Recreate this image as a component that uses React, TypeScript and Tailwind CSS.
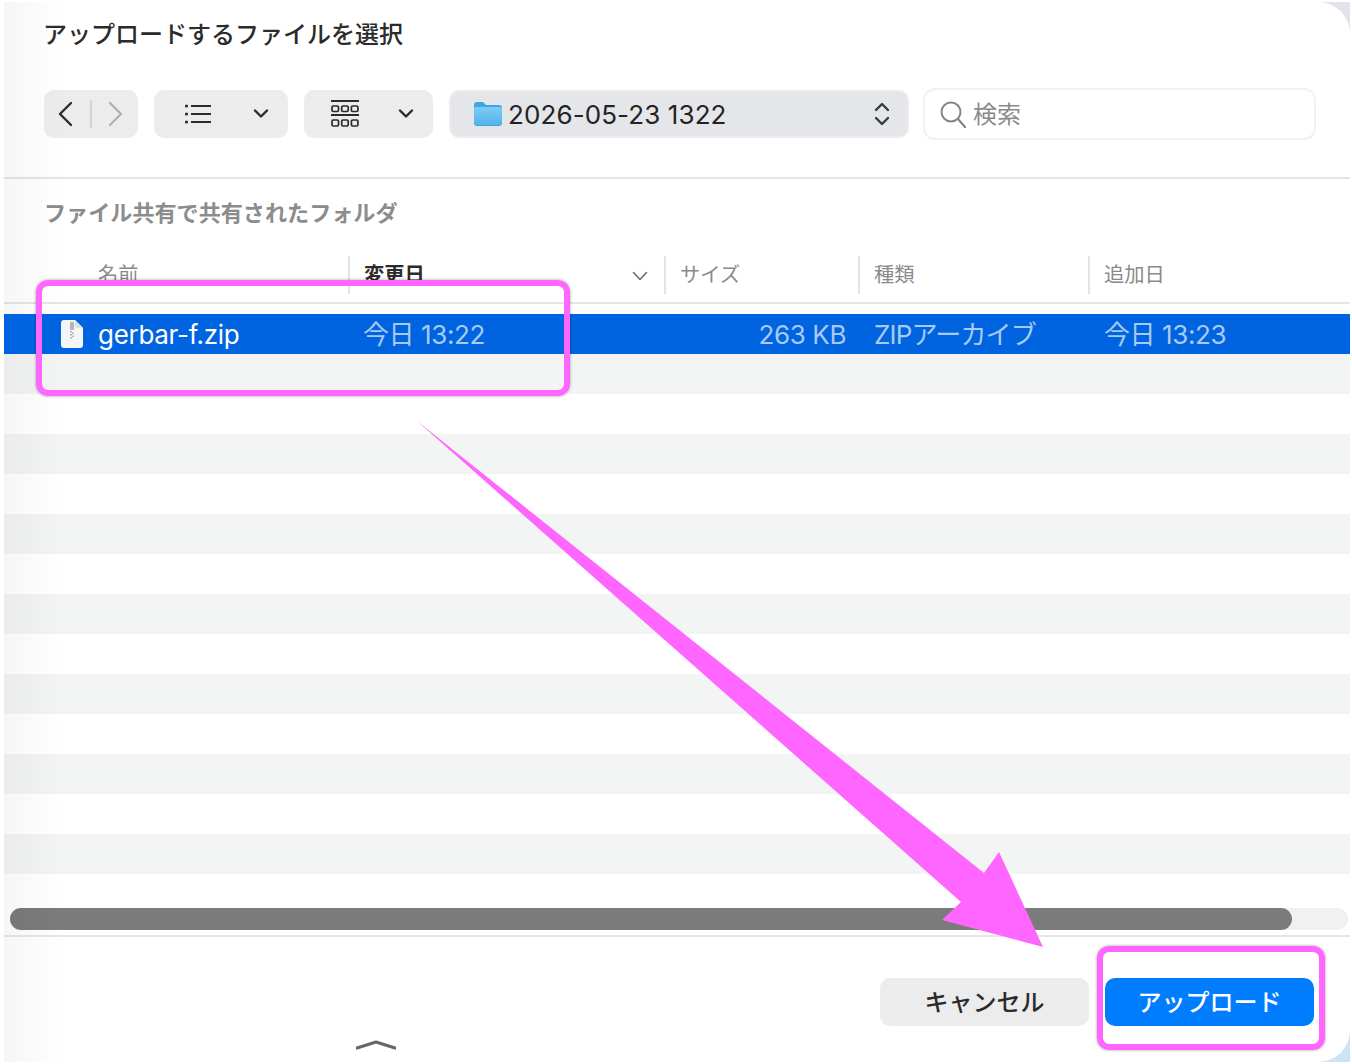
const jp = "font-['Inter','Noto_Sans_CJK_JP',sans-serif]";

const Chevron = ({ className = '' }: { className?: string }) => (
  <svg width="16" height="12" viewBox="0 0 16 12" className={className}>
    <path d="M2 2.5 L8 8.5 L14 2.5" fill="none" stroke="#2b2b2b" strokeWidth="2.4" strokeLinecap="round" strokeLinejoin="round" />
  </svg>
);

const ListIcon = () => (
  <svg width="28" height="22" viewBox="0 0 28 22">
    <circle cx="2.5" cy="3" r="1.6" fill="#2b2b2b" />
    <circle cx="2.5" cy="11" r="1.6" fill="#2b2b2b" />
    <circle cx="2.5" cy="19" r="1.6" fill="#2b2b2b" />
    <path d="M7 3H27M7 11H27M7 19H27" stroke="#2b2b2b" strokeWidth="1.8" />
  </svg>
);

const GalleryIcon = () => (
  <svg width="28" height="28" viewBox="0 0 28 28">
    <path d="M0 1H28M0 15H28" stroke="#2b2b2b" strokeWidth="1.8" />
    <rect x="1" y="6" width="6.5" height="5.5" rx="1.2" fill="none" stroke="#2b2b2b" strokeWidth="1.7" />
    <rect x="10.7" y="6" width="6.5" height="5.5" rx="1.2" fill="none" stroke="#2b2b2b" strokeWidth="1.7" />
    <rect x="20.4" y="6" width="6.5" height="5.5" rx="1.2" fill="none" stroke="#2b2b2b" strokeWidth="1.7" />
    <rect x="1" y="20" width="6.5" height="6" rx="1.2" fill="none" stroke="#2b2b2b" strokeWidth="1.7" />
    <rect x="10.7" y="20" width="6.5" height="6" rx="1.2" fill="none" stroke="#2b2b2b" strokeWidth="1.7" />
    <rect x="20.4" y="20" width="6.5" height="6" rx="1.2" fill="none" stroke="#2b2b2b" strokeWidth="1.7" />
  </svg>
);

const FolderIcon = () => (
  <svg width="30" height="26" viewBox="0 0 30 26">
    <defs>
      <linearGradient id="folderFront" x1="0" y1="0" x2="0" y2="1">
        <stop offset="0" stopColor="#7ccbf6" />
        <stop offset="1" stopColor="#52b4ec" />
      </linearGradient>
    </defs>
    <path d="M1 4a3 3 0 0 1 3-3h6l3 3h13a3 3 0 0 1 3 3v15a3 3 0 0 1-3 3H4a3 3 0 0 1-3-3Z" fill="#3fa6e2" />
    <rect x="1" y="6" width="28" height="18" rx="2" fill="url(#folderFront)" />
  </svg>
);

const ZipFileIcon = () => (
  <svg width="22" height="28" viewBox="0 0 22 28">
    <path d="M3 0H14L22 8V25a3 3 0 0 1-3 3H3a3 3 0 0 1-3-3V3a3 3 0 0 1 3-3Z" fill="#f4f5f5" />
    <path d="M14 0L22 8H16a2 2 0 0 1-2-2Z" fill="#dfe2e4" />
    <rect x="9" y="2" width="4" height="8" rx="1" fill="#b4b7ba" />
    <path d="M9 11h2v1.5H9ZM11 12.5h2V14h-2ZM9 14h2v1.5H9ZM11 15.5h2V17h-2ZM9 17h2v1.5H9Z" fill="#b4b7ba" />
  </svg>
);

const columns = [
  { label: '名前', width: 'w-[344px]', pad: 'pl-[94px]', tone: 'text-[#8a8a8a]' },
  { label: '変更日', width: 'w-[316px]', pad: 'pl-[14px]', tone: 'text-[#2b2b2b] font-bold' },
  { label: 'サイズ', width: 'w-[194px]', pad: 'pl-[14px]', tone: 'text-[#8a8a8a]' },
  { label: '種類', width: 'w-[230px]', pad: 'pl-[14px]', tone: 'text-[#8a8a8a]' },
  { label: '追加日', width: 'flex-1', pad: 'pl-[14px]', tone: 'text-[#8a8a8a]' },
];

const stripes = [1, 2, 3, 4, 5, 6, 7, 8, 9, 10, 11, 12, 13];

export default function App() {
  return (
    <div className={`relative h-[1064px] w-[1352px] overflow-hidden bg-white pt-[2px] pr-[2px] pb-[2px] pl-[4px] ${jp}`}>
      <div className="flex h-full flex-col bg-[linear-gradient(to_bottom,#e3e4e9_50%,#cde3f1_50%)]">
        <div className="relative flex flex-1 flex-col rounded-tr-[32px] rounded-br-[32px] bg-white">
          <div className="flex h-[88px] items-start pt-[15px] pl-[39px] text-[24px] leading-[36px] font-medium text-[#2b2b2b]">
            アップロードするファイルを選択
          </div>

          <div className="flex h-[48px] items-center pl-[40px]">
            <div className="flex h-[48px] w-[94px] items-center rounded-[10px] bg-[#ececec]">
              <svg width="94" height="48" viewBox="0 0 94 48">
                <path d="M27 13 L16 24 L27 35" fill="none" stroke="#2b2b2b" strokeWidth="2.4" strokeLinecap="round" strokeLinejoin="round" />
                <path d="M47 10V38" stroke="#d4d4d4" strokeWidth="2" />
                <path d="M66 13 L77 24 L66 35" fill="none" stroke="#b0b0b0" strokeWidth="2.2" strokeLinecap="round" strokeLinejoin="round" />
              </svg>
            </div>
            <div className="ml-[16px] flex h-[48px] w-[134px] items-center rounded-[10px] bg-[#ececec] pl-[30px]">
              <ListIcon />
              <Chevron className="ml-[41px]" />
            </div>
            <div className="ml-[16px] flex h-[48px] w-[129px] items-center rounded-[10px] bg-[#ececec] pl-[27px]">
              <GalleryIcon />
              <Chevron className="ml-[39px]" />
            </div>
            <div className="ml-[16px] flex h-[48px] w-[460px] items-center rounded-[10px] border-[2px] border-[#ececec] bg-[#e5e6e9] pl-[22px]">
              <FolderIcon />
              <span className="ml-[5px] pt-[2px] text-[26px] leading-none tracking-[0.1px] text-[#232323]">2026-05-23 1322</span>
              <svg width="18" height="26" viewBox="0 0 18 26" className="ml-[146px]">
                <path d="M3 9 L9 3 L15 9M3 17 L9 23 L15 17" fill="none" stroke="#3a3a3a" strokeWidth="2.4" strokeLinecap="round" strokeLinejoin="round" />
              </svg>
            </div>
            <div className="ml-[14px] flex h-[52px] w-[393px] items-center rounded-[12px] border-[2px] border-[#f1f1f1] bg-white pl-[14px]">
              <svg width="28" height="28" viewBox="0 0 28 28">
                <circle cx="12" cy="12" r="9.5" fill="none" stroke="#858585" strokeWidth="2" />
                <path d="M19 19 L26 27" stroke="#858585" strokeWidth="2.2" strokeLinecap="round" />
              </svg>
              <span className="ml-[6px] pt-[2px] text-[24px] leading-none text-[#8a8a8a]">検索</span>
            </div>
          </div>

          <div className="mt-[39px] h-[2px] bg-[#e4e4e4]" />

          <div className="flex h-[75px] items-start pt-[18px] pl-[40px] text-[22.1px] leading-[33px] font-bold text-[#8c8c8c]">
            ファイル共有で共有されたフォルダ
          </div>

          <div className="flex h-[50px] border-b-[2px] border-[#e6e6e6] pt-[2px]">
            {columns.map((col, i) => (
              <div
                key={col.label}
                className={`relative flex h-[38px] items-center text-[20.3px] leading-none ${col.width} ${col.pad} ${col.tone} ${i > 0 ? 'border-l-[2px] border-[#e2e2e2]' : ''}`}
              >
                {col.label}
                {i === 1 && (
                  <svg width="16" height="10" viewBox="0 0 16 10" className="absolute top-[15px] right-[16px]">
                    <path d="M1.5 1.5 L8 8.5 L14.5 1.5" fill="none" stroke="#6f6f6f" strokeWidth="1.6" strokeLinecap="round" strokeLinejoin="round" />
                  </svg>
                )}
              </div>
            ))}
          </div>

          <div className="h-[10px]" />

          <div className="relative z-10 flex h-[40px] items-center bg-[#0064e1] text-[26px] leading-none tracking-[-0.4px] text-[#a9caf5]">
            <div className="flex w-[345px] items-center pl-[57px]">
              <ZipFileIcon />
              <span className="ml-[15px] pt-[2px] tracking-[-0.3px] text-white">gerbar-f.zip</span>
            </div>
            <div className="w-[316px] pt-[2px] pl-[14px]">今日 13:22</div>
            <div className="w-[181px] pt-[2px] text-right">263 KB</div>
            <div className="w-[230px] pt-[2px] pl-[28px] tracking-[-0.8px] whitespace-nowrap">ZIPアーカイブ</div>
            <div className="pt-[2px] pl-[28px]">今日 13:23</div>
          </div>

          <div className="flex flex-col">
            {stripes.map((n) => (
              <div key={n} className={`h-[40px] ${n % 2 === 1 ? 'bg-[#f3f5f5]' : 'bg-white'}`} />
            ))}
          </div>

          <div className="flex h-[61px] flex-col justify-start pt-[34px] pl-[6px]">
            <div className="h-[22px] w-[1338px] rounded-full bg-[#f1f1f1]">
              <div className="h-[22px] w-[1282px] rounded-full bg-[#7b7b7b]" />
            </div>
          </div>

          <div className="h-[2px] bg-[#e6e6e6]" />

          <div className="flex flex-1 items-start justify-end pt-[41px] pr-[36px]">
            <div className="flex h-[48px] w-[209px] items-center justify-center rounded-[10px] bg-[#ececec] pt-[2px] text-[24px] leading-none font-medium text-[#2b2b2b]">
              キャンセル
            </div>
            <div className="ml-[16px] flex h-[48px] w-[209px] items-center justify-center rounded-[10px] bg-[#007dff] pt-[2px] text-[24px] leading-none font-medium text-white">
              アップロード
            </div>
          </div>

          <div className="pointer-events-none absolute inset-y-0 left-0 w-[62px] bg-gradient-to-r from-[#00000009] to-transparent" />
        </div>
      </div>

      {/* annotations drawn over the dialog */}
      <svg width="40" height="14" viewBox="0 0 40 14" className="absolute top-[1039px] left-[356px]">
        <path d="M1 9 L20 3 L39 9" fill="none" stroke="#666" strokeWidth="3" strokeLinecap="round" strokeLinejoin="round" />
      </svg>
      <div className="absolute top-[280px] left-[36px] z-20 h-[116px] w-[534px] rounded-[12px] border-[6px] border-[#ff66ff] shadow-[0_0_3px_rgba(0,0,0,0.4)]" />
      <div className="absolute top-[946px] left-[1097px] z-20 h-[104px] w-[228px] rounded-[12px] border-[6px] border-[#ff66ff] shadow-[0_0_3px_rgba(0,0,0,0.4)]" />
      <svg width="1352" height="1064" viewBox="0 0 1352 1064" className="pointer-events-none absolute top-0 left-0 z-20">
        <polygon points="417,421 984,873 999,852 1043,947 942,920 961,902" fill="#ff66ff" />
      </svg>
    </div>
  );
}
